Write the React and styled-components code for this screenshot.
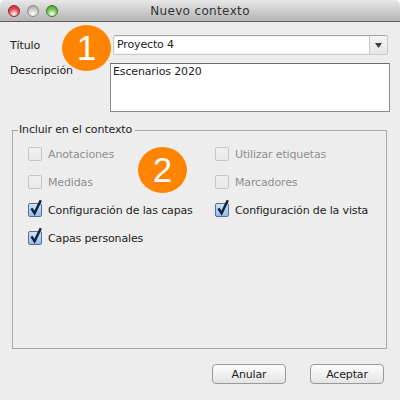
import React from "react";
import styled, { createGlobalStyle } from "styled-components";

const GlobalStyle = createGlobalStyle`
  html, body {
    margin: 0;
    padding: 0;
    background: #fff;
  }
  * {
    box-sizing: border-box;
  }
`;

const options = [
  { label: "Anotaciones", disabled: true },
  { label: "Utilizar etiquetas", disabled: true },
  { label: "Medidas", disabled: true },
  { label: "Marcadores", disabled: true },
  { label: "Configuración de las capas", checked: true },
  { label: "Configuración de la vista", checked: true },
  { label: "Capas personales", checked: true },
];

function Option({ label, checked, disabled }) {
  return (
    <OptionRow $disabled={disabled}>
      <CheckBox $checked={checked}>
        {checked && (
          <svg width="17" height="19" viewBox="0 0 17 19">
            <path d="M3.4 10.4 L6.6 15.2 L12.8 2.2" fill="none" stroke="#0f2340" strokeWidth="2.5" />
          </svg>
        )}
      </CheckBox>
      {label}
    </OptionRow>
  );
}

export default function App() {
  return (
    <Window>
      <GlobalStyle />
      <TitleBar>
        <Lights>
          <Light $color="#e8474c" $dark="#8e2a2e" />
          <Light $color="#c8c8c8" $dark="#8b8b8b" />
          <Light $color="#6fc14c" $dark="#3f7d30" />
        </Lights>
        <Title>Nuevo contexto</Title>
      </TitleBar>
      <Content>
        <FormRow>
          <FieldLabel>Título</FieldLabel>
          <Combo>
            <ComboValue>Proyecto 4</ComboValue>
            <ComboArrow>
              <svg width="7" height="5" viewBox="0 0 7 5">
                <path d="M0 0 H7 L3.5 5 Z" fill="#3c3c3c" />
              </svg>
            </ComboArrow>
          </Combo>
        </FormRow>
        <DescriptionRow>
          <FieldLabel>Descripción</FieldLabel>
          <TextBox>Escenarios 2020</TextBox>
        </DescriptionRow>
        <Group>
          <GroupTitle>Incluir en el contexto</GroupTitle>
          <OptionGrid>
            {options.map((o) => (
              <Option key={o.label} {...o} />
            ))}
          </OptionGrid>
        </Group>
        <Actions>
          <PushButton>Anular</PushButton>
          <PushButton>Aceptar</PushButton>
        </Actions>
      </Content>
      <Badge $left={62} $top={25}>1</Badge>
      <Badge $left={138} $top={147}>2</Badge>
    </Window>
  );
}

const Window = styled.div`
  position: relative;
  width: 400px;
  height: 400px;
  background: #ededed;
  border-radius: 5px 5px 0 0;
  overflow: hidden;
  font-family: "DejaVu Sans", sans-serif;
  font-size: 11px;
  letter-spacing: -0.14px;
  color: #222;
`;

const TitleBar = styled.div`
  position: relative;
  height: 22px;
  display: flex;
  align-items: center;
  justify-content: center;
  background: linear-gradient(#e8e8e8, #b4b4b4);
  border-bottom: 1px solid #5e5e5e;
`;

const Lights = styled.div`
  position: absolute;
  left: 8px;
  top: 5px;
  display: flex;
  gap: 7px;
`;

const Light = styled.span`
  width: 12px;
  height: 12px;
  border-radius: 50%;
  border: 1px solid ${(p) => p.$dark};
  background: radial-gradient(circle at 50% 80%, #fff 0%, ${(p) => p.$color} 55%, ${(p) => p.$dark} 115%);
`;

const Title = styled.div`
  font-size: 12px;
  letter-spacing: 0.35px;
  color: #333;
`;

const Content = styled.div`
  padding: 13px 10px 0 10px;
`;

const FormRow = styled.div`
  display: flex;
  align-items: center;
  height: 20px;
`;

const FieldLabel = styled.div`
  width: 100px;
  flex: none;
`;

const Combo = styled.div`
  margin-left: 3px;
  width: 275px;
  height: 20px;
  display: flex;
  background: #fff;
  border: 1px solid #cacaca;
  border-top-color: #a4a4a4;
  border-radius: 3px;
  box-shadow: inset 0 0 0 1px #f2f2f2;
`;

const ComboValue = styled.div`
  flex: 1;
  padding-left: 3px;
  line-height: 18px;
`;

const ComboArrow = styled.div`
  width: 18px;
  display: flex;
  align-items: center;
  justify-content: center;
  background: linear-gradient(#f6f6f6, #e6e6e6);
  border-left: 1px solid #c8c8c8;
  border-radius: 0 3px 3px 0;
`;

const DescriptionRow = styled.div`
  display: flex;
  align-items: flex-start;
  margin-top: 8px;
  line-height: 16px;
`;

const TextBox = styled.div`
  width: 280px;
  height: 49px;
  background: #fff;
  border: 1px solid #8c8c8c;
  border-top-color: #6a6a6a;
  padding: 0 2px;
  line-height: 16px;
`;

const Group = styled.fieldset`
  margin: 11px 3px 0 2px;
  padding: 3px 0 0 15px;
  height: 226px;
  border: 1px solid #a8a8a8;
  min-inline-size: 0;
`;

const GroupTitle = styled.legend`
  margin-left: -10px;
  padding: 0 3px 0 1px;
  line-height: 14px;
`;

const OptionGrid = styled.div`
  display: grid;
  grid-template-columns: 187px 1fr;
  grid-auto-rows: 28px;
`;

const OptionRow = styled.div`
  display: flex;
  align-items: center;
  gap: 6px;
  white-space: nowrap;
  color: ${(p) => (p.$disabled ? "#8f8f8f" : "#222")};
`;

const CheckBox = styled.span`
  position: relative;
  width: 14px;
  height: 14px;
  flex: none;
  border-radius: 2px;
  border: 1px solid ${(p) => (p.$checked ? "#5a6f8c" : "#c6c6c6")};
  background: ${(p) => (p.$checked ? "linear-gradient(#cfe2f8, #96bbe8)" : "linear-gradient(#f0f0f0, #e9e9e9)")};

  svg {
    position: absolute;
    left: -1px;
    top: -6px;
  }
`;

const Actions = styled.div`
  display: flex;
  justify-content: flex-end;
  gap: 24px;
  margin: 15px 6px 0 0;
`;

const PushButton = styled.button`
  width: 74px;
  height: 20px;
  padding: 0;
  font-family: inherit;
  font-size: 11px;
  letter-spacing: inherit;
  color: #222;
  background: linear-gradient(#fdfdfd, #e4e4e4);
  border: 1px solid #9a9a9a;
  border-radius: 4px;
`;

const Badge = styled.div`
  position: absolute;
  left: ${(p) => p.$left}px;
  top: ${(p) => p.$top}px;
  width: 49px;
  height: 46px;
  border-radius: 50%;
  background: #ff8400;
  color: #fff;
  font-family: "Liberation Sans", sans-serif;
  font-size: 35px;
  letter-spacing: 0;
  line-height: 46px;
  text-align: center;
`;
